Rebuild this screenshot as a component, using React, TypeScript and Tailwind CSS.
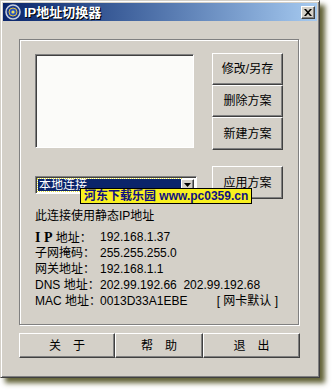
const raised =
  "bg-[#d4d0c8] border border-t-white border-l-white border-r-[#404040] border-b-[#404040] shadow-[inset_-1px_-1px_0_#808080]";

function Btn({ label, className = "" }: { label: string; className?: string }) {
  return (
    <div className={`${raised} flex items-center justify-center text-[12px] text-black ${className}`}>
      {label}
    </div>
  );
}

function Info({ label, value, extra }: { label: React.ReactNode; value: string; extra?: string }) {
  return (
    <div className="flex h-[16px] items-center">
      <div className="w-[65px] whitespace-nowrap">{label}</div>
      <div className="whitespace-pre">{value}</div>
      {extra && <div className="ml-auto mr-[20px] whitespace-nowrap">{extra}</div>}
    </div>
  );
}

export default function App() {
  return (
    <div
      className="relative w-[332px] h-[391px] bg-white overflow-hidden text-black"
      style={{ fontFamily: "'Liberation Sans', 'Noto Sans CJK SC', sans-serif" }}
    >
      <div className="w-[320px] h-[378px] bg-[#d4d0c8] border border-t-[#d4d0c8] border-l-[#d4d0c8] border-r-[#404040] border-b-[#404040] shadow-[inset_1px_1px_0_white,inset_-1px_-1px_0_#808080,5px_5px_5px_rgba(70,70,20,0.85)] p-[2px]">
        {/* title bar */}
        <div className="flex h-[18px] items-center bg-gradient-to-r from-[#0a246a] to-[#a6caf0] pl-[2px] pr-[2px]">
          <svg width="16" height="16" viewBox="0 0 16 16">
            <circle cx="8" cy="8" r="7" fill="#1c3b8c" stroke="#c8d0e0" strokeWidth="1.5" />
            <circle cx="8" cy="8" r="4" fill="#2a55c0" stroke="#e0c040" strokeWidth="1" />
            <circle cx="8" cy="8" r="1.6" fill="#f0e060" />
          </svg>
          <span className="ml-[3px] text-[13px] font-bold text-white leading-none [text-shadow:1px_1px_0_#000]">
            IP地址切换器
          </span>
          <div className="ml-auto flex h-[13px] w-[14px] items-center justify-center bg-[#d4d0c8] border border-t-white border-l-white border-r-[#404040] border-b-[#404040] shadow-[inset_-1px_-1px_0_#808080]">
            <svg width="8" height="7" viewBox="0 0 8 7">
              <path d="M0 0 L2 0 L4 2.3 L6 0 L8 0 L5 3.5 L8 7 L6 7 L4 4.7 L2 7 L0 7 L3 3.5 Z" fill="#000" />
            </svg>
          </div>
        </div>

        {/* group box */}
        <div className="ml-[16px] mt-[18px] w-[280px] h-[286px] border border-[#808080] shadow-[inset_1px_1px_0_white,1px_1px_0_white] pl-[15px] pt-[14px] text-[12px]">
          <div className="flex">
            <div className="w-[159px] h-[94px] bg-[#fbfbf9] border border-t-[#808080] border-l-[#808080] border-r-white border-b-white shadow-[inset_1px_1px_0_#404040]" />
            <div className="ml-[18px] -mt-[1px] flex flex-col">
              <Btn label="修改/另存" className="w-[71px] h-[32px]" />
              <Btn label="删除方案" className="w-[71px] h-[32px]" />
              <Btn label="新建方案" className="w-[71px] h-[33px]" />
            </div>
          </div>

          <div className="mt-[16px] flex">
            <div className="mt-[10px] flex w-[162px] h-[18px] bg-white border border-t-[#808080] border-l-[#808080] border-r-white border-b-white shadow-[inset_1px_1px_0_#404040] p-[2px]">
              <div className="flex-1 bg-[#0a246a] text-white leading-[12px] pl-[1px] outline-1 outline-dotted outline-[#e0e040]">本地连接</div>
              <div className={`${raised} w-[13px] flex items-center justify-center`}>
                <svg width="7" height="4" viewBox="0 0 7 4"><path d="M0 0 L7 0 L3.5 4 Z" fill="#000" /></svg>
              </div>
            </div>
            <Btn label="应用方案" className="ml-[15px] w-[71px] h-[33px]" />
          </div>

          <div className="mt-[9px] h-[16px] leading-[16px]">此连接使用静态IP地址</div>
          <div className="mt-[5px] flex flex-col">
            <Info
              label={
                <span>
                  <span className="font-bold" style={{ fontFamily: "'Liberation Serif', serif", fontSize: 14 }}>I P</span> 地址：
                </span>
              }
              value="192.168.1.37"
            />
            <Info label="子网掩码：" value="255.255.255.0" />
            <Info label="网关地址：" value="192.168.1.1" />
            <Info label="DNS 地址：" value="202.99.192.66  202.99.192.68" />
            <Info label="MAC 地址：" value="0013D33A1EBE" extra="[ 网卡默认 ]" />
          </div>
        </div>

        {/* bottom buttons */}
        <div className="ml-[16px] mt-[8px] flex w-[281px] h-[25px] text-[12px]">
          <Btn label="关　于" className="w-[96px] h-full" />
          <Btn label="帮　助" className="w-[88px] h-full" />
          <Btn label="退　出" className="w-[97px] h-full" />
        </div>
      </div>

      {/* watermark */}
      <div className="absolute left-[80px] top-[188px] flex h-[16px] items-center border border-black bg-[#f8f020] px-[3px] text-[12px] font-bold text-[#101080] leading-none whitespace-nowrap">
        河东下载乐园 www.pc0359.cn
      </div>
    </div>
  );
}
